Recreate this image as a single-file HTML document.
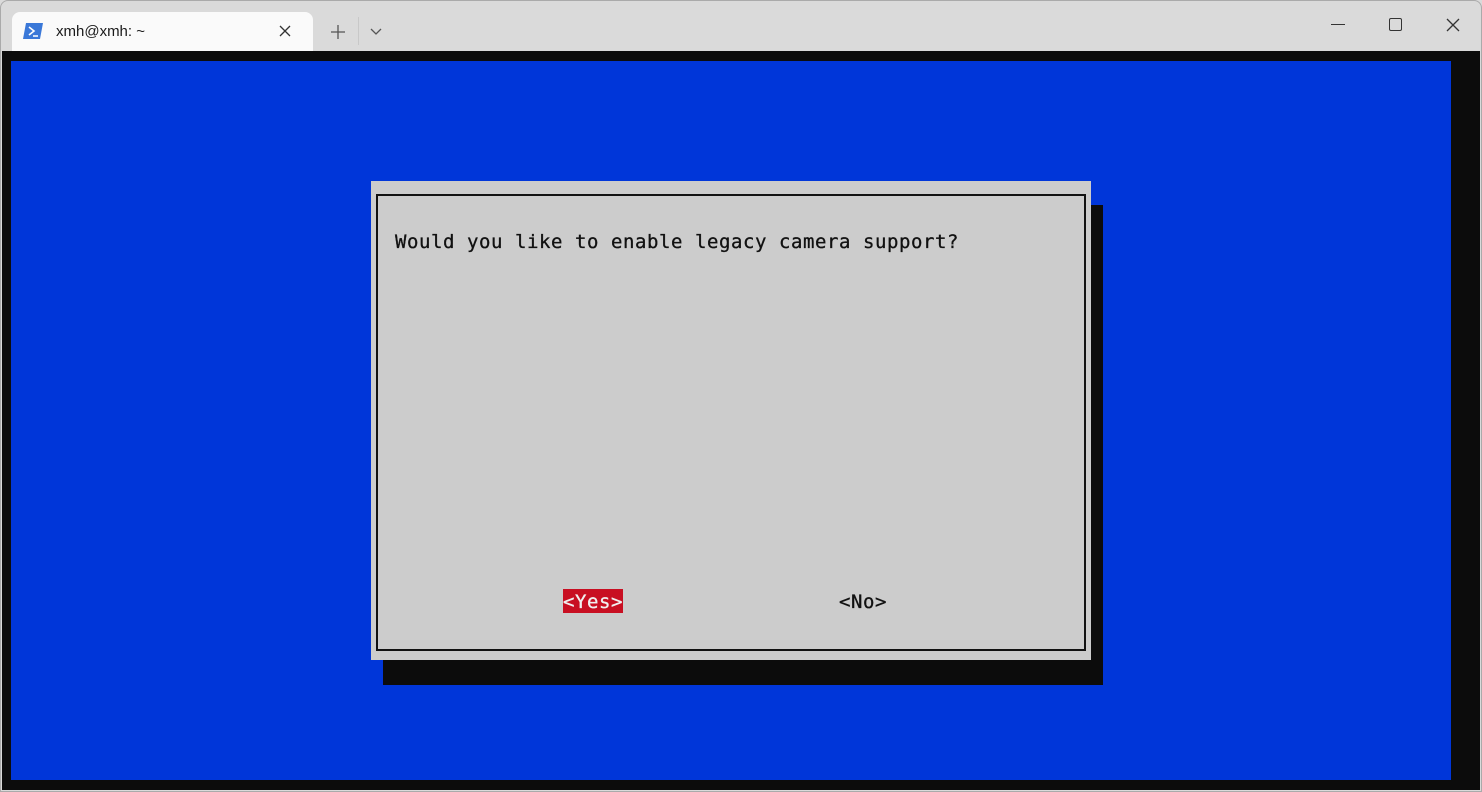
<!DOCTYPE html>
<html><head><style>
body{margin:0;width:1482px;height:792px;background:#dadada;position:relative;overflow:hidden;font-family:"Liberation Sans",sans-serif}
.a{position:absolute}
.mono{font-family:"DejaVu Sans Mono","Liberation Mono",monospace;font-size:19px;line-height:24px;color:#111;white-space:pre;letter-spacing:0.56px;-webkit-text-stroke:0.3px currentColor}
</style></head><body>
<div class="a" style="left:0;top:0;width:1482px;height:792px;border:1px solid #aaa;box-sizing:border-box;border-radius:8px 8px 0 0"></div>
<div class="a" style="left:12px;top:12px;width:301px;height:40px;background:#fafafa;border-radius:8px 8px 0 0"></div>
<svg class="a" style="left:23px;top:23px" width="20" height="16"><polygon points="3,0 20,0 17,16 0,16" fill="#3a78d8"/><path d="M6 4 L11 8 L6 12 M10 13 L15 13" stroke="#fff" stroke-width="1.6" fill="none"/></svg>
<div class="a" style="left:56px;top:23px;font-size:15px;color:#1a1a1a">xmh@xmh: ~</div>
<svg class="a" style="left:279px;top:25px" width="12" height="12"><path d="M1 1L11 11M11 1L1 11" stroke="#333" stroke-width="1.3"/></svg>
<svg class="a" style="left:331px;top:25px" width="14" height="14"><path d="M7 0V14M0 7H14" stroke="#555" stroke-width="1.3"/></svg>
<div class="a" style="left:358px;top:17px;width:1px;height:28px;background:#c8c8c8"></div>
<svg class="a" style="left:370px;top:28px" width="12" height="8"><path d="M1 1L6 6L11 1" stroke="#555" stroke-width="1.3" fill="none"/></svg>
<div class="a" style="left:1331px;top:24px;width:14px;height:1.3px;background:#333"></div>
<div class="a" style="left:1389px;top:18px;width:11px;height:11px;border:1.3px solid #333;border-radius:2px"></div>
<svg class="a" style="left:1446px;top:18px" width="14" height="14"><path d="M1 1L13 13M13 1L1 13" stroke="#333" stroke-width="1.3"/></svg>
<div class="a" style="left:2px;top:51px;width:1478px;height:739px;background:#0c0c0c"></div>
<div class="a" style="left:11px;top:61px;width:1440px;height:719px;background:#0036d9"></div>
<div class="a" style="left:383px;top:205px;width:720px;height:480px;background:#0c0c0c"></div>
<div class="a" style="left:371px;top:181px;width:720px;height:479px;background:#cccccc"></div>
<div class="a" style="left:376px;top:194px;width:706px;height:453px;border:2px solid #111"></div>
<div class="a mono" style="left:395px;top:230px">Would you like to enable legacy camera support?</div>
<div class="a mono" style="left:563px;top:589px;width:60px;background:#c80f22;color:#f0f0f0;padding-top:1px;height:23px">&lt;Yes&gt;</div>
<div class="a mono" style="left:839px;top:590px">&lt;No&gt;</div>
</body></html>
